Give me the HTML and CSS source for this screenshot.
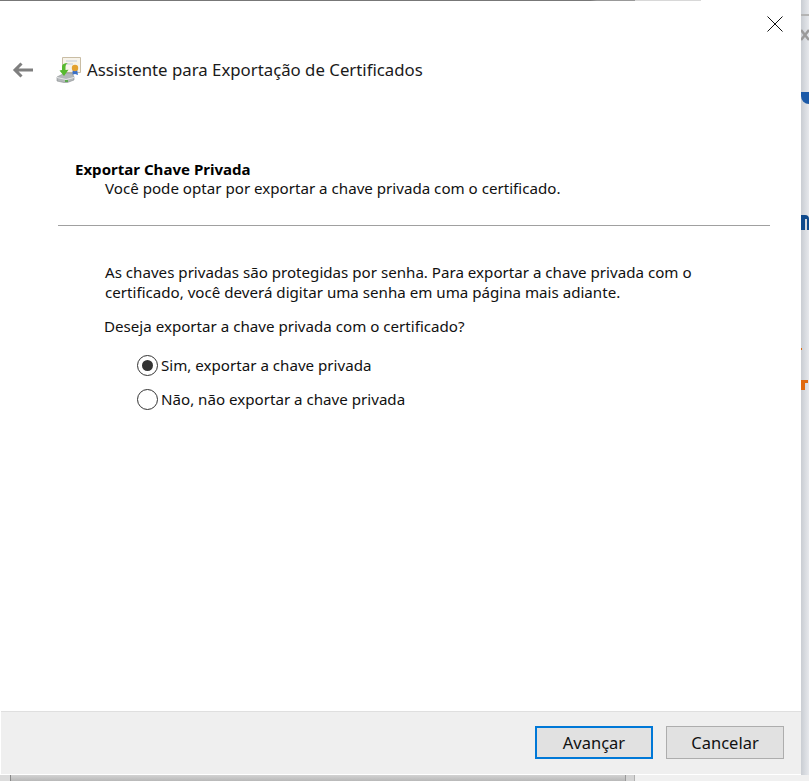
FILE: index.html
```html
<!DOCTYPE html>
<html lang="pt">
<head>
<meta charset="utf-8">
<title>Assistente para Exportação de Certificados</title>
<link rel="stylesheet" href="styles.css">
</head>
<body>
<div class="desktop">
  <div class="topline"></div>
  <div class="topline-fade"></div>
  <div class="side">
    <div class="side-line"></div>
    <svg class="side-x" width="8" height="12" viewBox="0 0 8 12"><path d="M0 1l8 10M8 1L0 11" stroke="#9a9a9a" stroke-width="2.500" fill="none"/></svg>
    <div class="side-blue"></div>
    <div class="side-n"></div>
    <div class="side-dot"></div>
    <div class="side-r"></div>
  </div>
  <div class="bottom-seg seg0"></div>
  <div class="bottom-seg seg1"></div>
  <div class="bottom-seg seg2"></div>
  <div class="bottom-seg seg3"></div>
  <main class="window">
    <div class="titlebar">
      <svg class="close" width="16" height="16" viewBox="0 0 16 16"><path d="M.5.5l15 15M15.500.5l-15 15" stroke="#111" stroke-width="1" fill="none"/></svg>
    </div>
    <header class="head">
      <svg class="back" width="22" height="16" viewBox="0 0 22 16"><path d="M21 8H3M9.500 1.500L3 8l6.500 6.500" stroke="#7f7f7f" stroke-width="3" fill="none"/></svg>
      <svg class="cert" width="26" height="26" viewBox="0 0 26 26">
        <path d="M6.500 .5h18v15h-18z" fill="#f7f3ea" stroke="#c9bda4"/>
        <path d="M10 4h11M10 7h7" stroke="#c2cbdb"/>
        <path d="M17 12l-1 6 3-1 3 1-1-6z" fill="#3a70c8"/>
        <circle cx="19" cy="11" r="3.200" fill="#e3a12f"/>
        <path d="M1 20l8-4h7l2 4v3l-8 3-9-2z" fill="#b4b8ba" stroke="#8a8e91" stroke-width=".6"/>
        <path d="M1 20l9 2 8-2v1l-8 2-9-2z" fill="#e6e8e9"/>
        <path d="M8 19L3.500 13.500 6 13V9.500c0-2 2-3.500 6-3.500 -2 1-2.500 2.500-2.500 4V13l3-.2z" fill="#57b92f"/>
        <path d="M9 24h3" stroke="#3fa32a" stroke-width="1.500"/>
      </svg>
      <h1 class="title">Assistente para Exportação de Certificados</h1>
    </header>
    <section class="content">
      <div class="section-head">
        <h2 class="section-title">Exportar Chave Privada</h2>
        <p class="section-sub">Você pode optar por exportar a chave privada com o certificado.</p>
      </div>
      <hr class="rule">
      <p class="para">As chaves privadas são protegidas por senha. Para exportar a chave privada com o<br>certificado, você deverá digitar uma senha em uma página mais adiante.</p>
      <p class="question">Deseja exportar a chave privada com o certificado?</p>
      <div class="options">
        <label class="option"><span class="radio checked"></span>Sim, exportar a chave privada</label>
        <label class="option"><span class="radio"></span>Não, não exportar a chave privada</label>
      </div>
    </section>
    <footer class="footer">
      <button class="btn primary">Avançar</button>
      <button class="btn">Cancelar</button>
    </footer>
  </main>
</div>
</body>
</html>
```
FILE: styles.css
```css
* { box-sizing: border-box; }
html, body { margin: 0; height: 100%; overflow: hidden; }
body { font-family: "Noto Sans", "Open Sans", sans-serif; color: #111; }
.desktop { position: relative; width: 809px; height: 781px; background: #fff; overflow: hidden; }
.topline { position: absolute; left: 0; top: 0; width: 635px; height: 1px; background: linear-gradient(90deg, #777 0, #777 93%, #999 94%, #999 100%); }
.topline-fade { position: absolute; left: 635px; top: 0; width: 66px; height: 1px; background: #d8d8d8; }
.side { position: absolute; left: 801px; top: 0; width: 8px; height: 781px; background: linear-gradient(90deg, #c9cdd3, #e6e8ec); overflow: hidden; }
.side-line { position: absolute; left: 0; top: 14px; width: 8px; height: 2px; background: #b4b4b4; }
.side-x { position: absolute; top: 29px; left: 0; }
.side-blue { position: absolute; left: 0; top: 92px; width: 8px; height: 12px; background: #1b5aa8; border-bottom-left-radius: 8px; }
.side-n { position: absolute; left: 0; top: 215px; width: 8px; height: 15px; background: #0f4a8c; border-top-right-radius: 4px; }
.side-n::after { content: ""; position: absolute; left: 4px; top: 4px; width: 2px; height: 11px; background: #d4d7dc; }
.side-dot { position: absolute; left: 0; top: 348px; width: 1px; height: 2px; background: #d96a14; }
.side-r { position: absolute; left: 0; top: 380px; width: 7px; height: 10px; background: linear-gradient(90deg, #e06a10 0, #e06a10 4px, transparent 4px); }
.side-r::after { content: ""; position: absolute; left: 4px; top: 0; width: 3px; height: 3px; background: #e06a10; }
.bottom-seg { position: absolute; top: 775px; height: 6px; }
.seg0 { left: 0; width: 11px; background: #dcdcdc; border-right: 1px solid #8a8a8a; }
.seg1 { left: 11px; width: 614px; background: linear-gradient(#d2d2d2, #b8b8b8); }
.seg2 { left: 625px; width: 10px; background: #d4d4d4; border-left: 1px solid #9a9a9a; border-right: 1px solid #b0b0b0; }
.seg3 { left: 635px; width: 174px; background: #f0f0f0; }
.window { position: absolute; left: 1px; top: 1px; width: 800px; height: 773px; background: #fff; display: flex; flex-direction: column; }
.titlebar { height: 46px; display: flex; justify-content: flex-end; padding: 15px 18px 0 0; flex: none; }
.head { display: flex; align-items: center; height: 46px; flex: none; padding-left: 11px; }
.back { margin-right: 22px; }
.cert { margin-right: 5px; }
.title { margin: 0; font-size: 16.800px; font-weight: 400; line-height: 24px; color: #1a1a1a; white-space: nowrap; }
.content { flex: 1; padding: 0 31px 0 57px; font-size: 15.130px; line-height: 19px; }
.section-head { padding: 67px 0 0 17px; }
.section-title { margin: 0; font-size: 15.050px; font-weight: 700; line-height: 19px; color: #000; }
.section-sub { margin: 0 0 0 30px; }
.rule { border: 0; border-top: 1px solid #a0a0a0; margin: 27px 0 0; }
.para { margin: 0; padding: 36px 0 0 47px; line-height: 20px; white-space: nowrap; }
.question { margin: 0; padding: 15px 0 0 46px; }
.options { padding: 19px 0 0 79px; display: flex; flex-direction: column; gap: 14px; }
.option { display: flex; align-items: center; gap: 3px; height: 20px; }
.radio { width: 21px; height: 21px; border: 1px solid #333; border-radius: 50%; background: #fff; flex: none; display: flex; align-items: center; justify-content: center; }
.radio.checked::after { content: ""; width: 11px; height: 11px; border-radius: 50%; background: #333; }
.footer { height: 63px; flex: none; background: #efefef; border-top: 1px solid #dfdfdf; display: flex; justify-content: flex-end; align-items: flex-start; gap: 13px; padding: 14px 17px 0 0; }
.btn { width: 118px; height: 33px; background: #e1e1e1; border: 1px solid #adadad; font: 400 16.500px/20px "Noto Sans", sans-serif; color: #111; padding: 0; }
.btn.primary { border: 2px solid #0078d7; }
```
